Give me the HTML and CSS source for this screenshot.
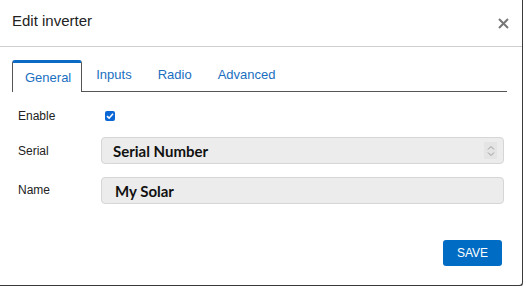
FILE: index.html
```html
<!DOCTYPE html>
<html lang="en">
<head>
    <meta charset="UTF-8">
    <meta name="viewport" content="width=device-width, initial-scale=1.0">
    <title>Edit inverter</title>
    <link rel="stylesheet" href="styles.css">
</head>
<body>
    <div class="modal">
        <div class="modal-header">
            <h2>Edit inverter</h2>
            <button class="close" aria-label="Close">
                <svg width="11" height="11" viewBox="0 0 11 11"><path d="M1 1L10 10M10 1L1 10" stroke="#777" stroke-width="2" fill="none"/></svg>
            </button>
        </div>

        <div class="tabs">
            <div class="tab active">General</div>
            <div class="tab">Inputs</div>
            <div class="tab">Radio</div>
            <div class="tab">Advanced</div>
        </div>

        <div class="form">
            <div class="row check-row">
                <label>Enable</label>
                <span class="checkbox">
                    <svg width="8" height="8" viewBox="0 0 8 8"><path d="M1 4.2L3.1 6.2L7 1.8" stroke="#fff" stroke-width="1.6" fill="none"/></svg>
                </span>
            </div>
            <div class="row">
                <label>Serial</label>
                <div class="field select">
                    <span>Serial Number</span>
                    <span class="arrows">
                        <svg width="8" height="12" viewBox="0 0 8 12"><path d="M1 4.5L4 1.5L7 4.5M1 7.5L4 10.5L7 7.5" stroke="#999" stroke-width="1" fill="none"/></svg>
                    </span>
                </div>
            </div>
            <div class="row">
                <label>Name</label>
                <div class="field input"><span>My Solar</span></div>
            </div>
        </div>

        <div class="modal-footer">
            <button class="save">SAVE</button>
        </div>
    </div>
</body>
</html>
```

FILE: styles.css
```css
body {
    margin: 0;
    background-color: #fff;
    font-family: Arial, "Liberation Sans", sans-serif;
    color: #222;
}

.modal {
    width: 522px;
    height: 285px;
    background-color: #fff;
    border-right: 1px solid #3a3a3a;
    border-bottom: 1px solid #3a3a3a;
    border-bottom-right-radius: 4px;
    box-shadow: 0 1px 0 #888;
    display: flex;
    flex-direction: column;
}

.modal-header {
    height: 46px;
    border-bottom: 1px solid #cfcfcf;
    display: flex;
    justify-content: space-between;
    align-items: flex-start;
    padding: 0 13px 0 12px;
}

.modal-header h2 {
    margin: 12px 0 0;
    font-size: 15px;
    font-weight: normal;
    line-height: 18px;
    color: #222;
}

.close {
    background: none;
    border: none;
    padding: 0;
    margin-top: 17px;
    cursor: pointer;
}

/* Tabs */
.tabs {
    display: flex;
    align-items: flex-end;
    margin: 13px 15px 0 12px;
    height: 31px;
    border-bottom: 1px solid #555;
}

.tab {
    font-size: 13px;
    color: #1a6fc1;
    padding: 0 11px;
    height: 29px;
    line-height: 25px;
    border: 1px solid transparent;
    border-bottom: none;
    margin-right: 2px;
    cursor: pointer;
}

.tab.active {
    line-height: 29px;
    border-color: #555;
    border-top: 3px solid #0b6bc4;
    border-radius: 3px 3px 0 0;
    margin-bottom: -1px;
    background-color: #fff;
    height: 29px;
    padding: 0 10px 0 12px;
}

/* Form */
.form {
    padding: 14px 18px 0 18px;
    display: flex;
    flex-direction: column;
    gap: 11px;
}

.row {
    display: flex;
    align-items: center;
}

.row label {
    width: 83px;
    font-size: 12px;
    color: #222;
}

.check-row {
    height: 20px;
}

.checkbox {
    width: 10px;
    height: 10px;
    margin-left: 4px;
    border-radius: 2px;
    background-color: #0b66d6;
    display: flex;
    align-items: center;
    justify-content: center;
}

.field {
    flex: 1;
    height: 25px;
    background-color: #ececec;
    border: 1px solid #d6d6d6;
    border-radius: 4px;
    display: flex;
    align-items: center;
    justify-content: space-between;
    font-family: Lato, "Open Sans", sans-serif;
    font-weight: bold;
    font-size: 15px;
    color: #111;
}

.select {
    padding: 0 6px 0 11px;
}

.input {
    padding: 0 12px 0 13px;
    margin-top: 2px;
}

.arrows {
    width: 13px;
    height: 17px;
    background-color: #e4e4e4;
    display: flex;
    align-items: center;
    justify-content: center;
}

/* Footer */
.modal-footer {
    margin-top: auto;
    display: flex;
    justify-content: flex-end;
    padding: 0 20px 19px 0;
}

.save {
    width: 59px;
    height: 26px;
    border: none;
    border-radius: 3px;
    background-color: #006cc4;
    color: #fff;
    font-family: Arial, "Liberation Sans", sans-serif;
    font-size: 12px;
    cursor: pointer;
}
```
